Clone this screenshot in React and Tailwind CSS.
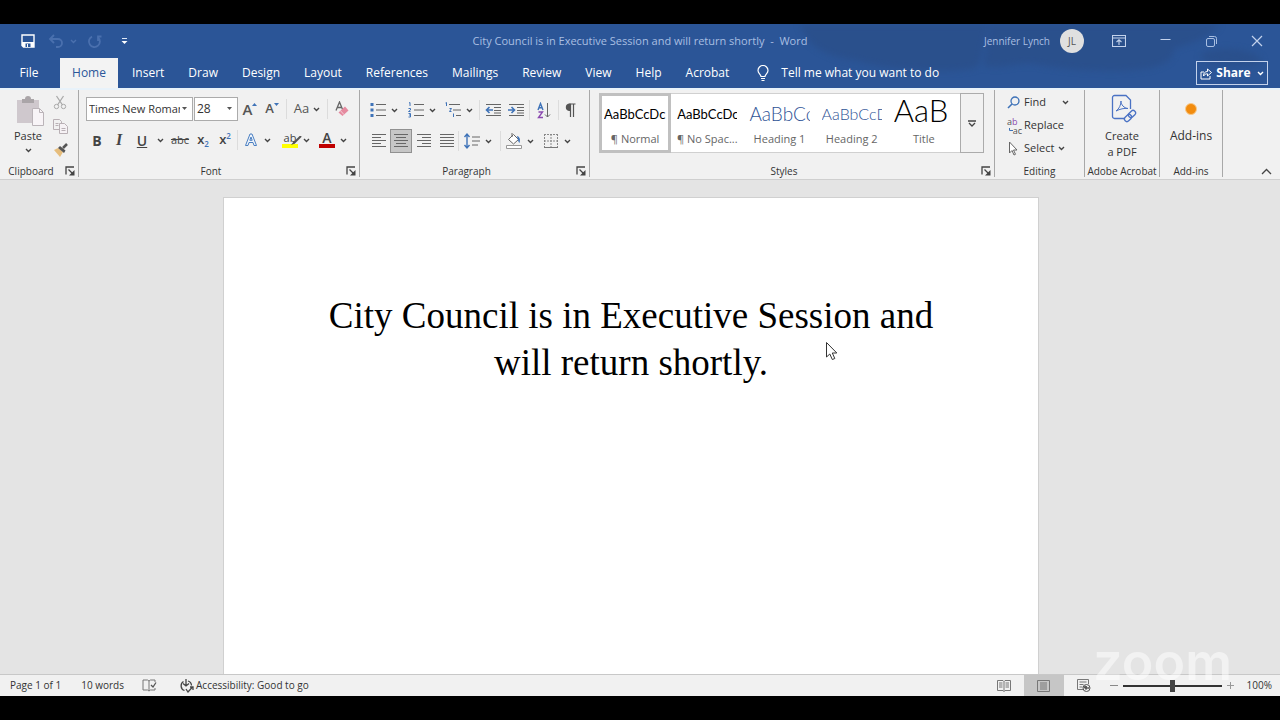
const TABS = [
  "Insert",
  "Draw",
  "Design",
  "Layout",
  "References",
  "Mailings",
  "Review",
  "View",
  "Help",
  "Acrobat",
];

const STYLES = [
  { name: "¶ Normal", sample: "AaBbCcDc", cls: "items-center leading-8 text-[13px] text-black", active: true },
  { name: "¶ No Spac...", sample: "AaBbCcDc", cls: "items-center leading-8 text-[13px] text-black" },
  { name: "Heading 1", sample: "AaBbCc", cls: "items-center leading-8 text-[19px] font-light text-[#2f5496]" },
  { name: "Heading 2", sample: "AaBbCcD", cls: "items-center leading-8 text-[16px] font-light text-[#2f5496]" },
  { name: "Title", sample: "AaB", cls: "items-start leading-7 text-[31px] font-light text-black" },
];

function Icon({ w = 18, h = 18, children, className = "" }) {
  return (
    <svg
      width={w}
      height={h}
      viewBox={`0 0 ${w} ${h}`}
      fill="none"
      stroke="#666"
      className={`shrink-0 ${className}`}
      aria-hidden="true"
    >
      {children}
    </svg>
  );
}

function Chevron({ color = "#444" }) {
  return (
    <Icon w={7} h={5}>
      <path d="M1 1l2.5 2.5L6 1" stroke={color} strokeWidth="1.4" />
    </Icon>
  );
}

function Btn({ label, className = "", children }) {
  return (
    <button type="button" aria-label={label} className={`flex h-6 shrink-0 items-center justify-center ${className}`}>
      {children}
    </button>
  );
}

function Split({ label, className = "", children }) {
  return (
    <Btn label={label} className={`gap-1 ${className}`}>
      {children}
      <Chevron />
    </Btn>
  );
}

function Sep({ className = "" }) {
  return <div className={`h-5 w-px shrink-0 bg-[#dcdcdc] ${className}`} />;
}

function Group({ title, launcher, className = "", children }) {
  return (
    <section className={`mt-0.5 mb-0.5 flex shrink-0 flex-col border-r border-[#a8a8a8] ${className}`}>
      <div className="min-h-0 flex-1">{children}</div>
      <div className="flex h-3 items-center text-[10px] text-[#333]">
        <span className="flex-1 text-center whitespace-nowrap">{title}</span>
        {launcher && (
          <button type="button" aria-label={`${title} settings`} className="flex w-4 justify-center">
            <Icon w={10} h={10}>
              <path d="M1 8.5V1h8" stroke="#444" strokeWidth="1.3" />
              <path d="M3.5 3.5l4 4" stroke="#444" strokeWidth="1.2" />
              <path d="M9.5 4v5.5H4z" fill="#444" stroke="none" />
            </Icon>
          </button>
        )}
      </div>
    </section>
  );
}

function Lines({ rows }) {
  return (
    <Icon>
      {rows.map(([a, b], i) => (
        <path key={i} d={`M${a} ${2.5 + i * 3}H${b}`} />
      ))}
    </Icon>
  );
}

function TitleBar() {
  return (
    <div className="relative grid h-[34px] grid-cols-[1fr_auto_1fr] items-center text-[#a9bfe2]">
      <div className="flex items-center pl-5">
        <Btn label="Save" className="w-4">
          <Icon w={14} h={14}>
            <path d="M1 1h12v12H2.5L1 11.5z" stroke="#fff" strokeWidth="1.4" />
            <path d="M1 8h12v5H2.5L1 11.5z" fill="#fff" stroke="none" />
            <path d="M4.500 9.5h5V13h-5z" fill="#2b579a" stroke="none" />
            <path d="M6.5 10v3" stroke="#fff" />
          </Icon>
        </Btn>
        <Btn label="Undo" className="ml-3 gap-1.5">
          <Icon w={16} h={14}>
            <path d="M2 5h8a4 4 0 010 8H8M6 1L2 5l4 4" stroke="#4a70ae" strokeWidth="1.8" />
          </Icon>
          <Chevron color="#4a70ae" />
        </Btn>
        <Btn label="Redo" className="ml-2.5">
          <Icon w={15} h={15}>
            <path d="M5 2.6a5.5 5.5 0 106 .8M11 7V2.5h3.5" stroke="#4a70ae" strokeWidth="1.8" />
          </Icon>
        </Btn>
        <Btn label="Customize toolbar" className="ml-3.5 w-4">
          <Icon w={7} h={8}>
            <path d="M1 1.5h5" stroke="#dfe8f7" />
            <path d="M.5 4h6l-3 3z" fill="#fff" stroke="none" />
          </Icon>
        </Btn>
      </div>
      <h1 className="text-[11px] whitespace-pre">
        City Council is in Executive Session and will return shortly{"  -  "}Word
      </h1>
      <div className="flex items-center justify-end text-[10px]">
        <span>Jennifer Lynch</span>
        <span className="mr-3 ml-2.5 flex size-6 items-center justify-center rounded-full bg-[#e0e0e0] text-[#555]">
          JL
        </span>
        <Btn label="Ribbon display options" className="w-[46px]">
          <Icon w={14} h={12}>
            <path d="M.5.5h13v11H.5zM.5 3h13M7 10V5M4.5 7L7 4.8 9.500 7" stroke="#c3d2ec" strokeWidth="1.1" />
          </Icon>
        </Btn>
        <Btn label="Minimize" className="w-[46px]">
          <Icon w={11} h={5}>
            <path d="M.5.5h10" stroke="#c3d2ec" />
          </Icon>
        </Btn>
        <Btn label="Restore" className="w-[46px]">
          <Icon w={11} h={11}>
            <rect x=".5" y="2.500" width="8" height="8" rx="1.500" stroke="#a9bfe2" />
            <path d="M3 .5h5.500a2 2 0 012 2V8" stroke="#a9bfe2" />
          </Icon>
        </Btn>
        <Btn label="Close" className="w-[46px]">
          <Icon w={12} h={12}>
            <path d="M1 1l10 10M11 1L1 11" stroke="#c3d2ec" strokeWidth="1.2" />
          </Icon>
        </Btn>
      </div>
    </div>
  );
}

function TabBar() {
  return (
    <nav className="relative flex h-[30px] items-stretch text-[12px] text-white">
      <button type="button" className="w-[60px] pr-0.5">File</button>
      <button type="button" className="mr-0.5 w-[58px] bg-[#f3f3f3] text-[#2b579a]">Home</button>
      {TABS.map((t) => (
        <button key={t} type="button" className="px-3">
          {t}
        </button>
      ))}
      <button type="button" className="ml-4 flex items-center gap-3">
        <Icon w={12} h={17}>
          <path
            d="M4 11.500C4 9.500 1 8.500 1 5.500a5 5 0 0110 0c0 3-3 4-3 6zM4 13.500h4M4.500 15.500h3"
            stroke="#fff"
            strokeWidth="1.2"
          />
        </Icon>
        Tell me what you want to do
      </button>
      <button
        type="button"
        className="mt-[3px] mr-3 mb-[3px] ml-auto flex w-[72px] items-center justify-center gap-1 border border-[#c3d2ec] font-bold"
      >
        <Icon w={12} h={13}>
          <path d="M4 5H1v7h9V9" stroke="#fff" />
          <path d="M3.500 9c0-3 1.500-4.500 4-4.500V2l4 3.500-4 3.500V6.800C5.500 6.800 4.500 7.500 3.500 9z" stroke="#fff" />
        </Icon>
        Share
        <span className="ml-0.5">
          <Chevron color="#fff" />
        </span>
      </button>
    </nav>
  );
}

function ClipboardGroup() {
  return (
    <Group title="Clipboard" launcher className="w-[79px]">
      <div className="flex pt-1.5 pl-3">
        <button type="button" className="flex w-8 flex-col items-center text-[11px] leading-4 text-[#333]">
          <Icon w={30} h={32} className="ml-1">
            <path d="M2 4h22v23H2z" fill="#cfc8cd" stroke="none" />
            <path d="M7 7V3h3a3 3 0 016 0h3v4z" fill="#aaa5a8" stroke="none" />
            <path d="M17.500 12.500h7l4 4v13h-11z" fill="#f8f4f7" stroke="#bbb4b9" />
            <path d="M24.500 12.500v4h4" stroke="#bbb4b9" />
          </Icon>
          Paste
          <span className="mt-1">
            <Chevron />
          </span>
        </button>
        <div className="ml-2 flex flex-col">
          <Btn label="Cut" className="-mt-1.5 w-4">
            <Icon w={14} h={15}>
              <path d="M3.500 1l6 9M10.500 1l-6 9" stroke="#aaa" strokeWidth="1.300" />
              <circle cx="3.500" cy="11.500" r="2.200" stroke="#aaa" />
              <circle cx="10.500" cy="11.500" r="2.200" stroke="#aaa" />
            </Icon>
          </Btn>
          <Btn label="Copy" className="w-4">
            <Icon w={15} h={15}>
              <path d="M.5.5h6l2 2v8h-8zM2.500 4.500h3M2.500 6.500h3" stroke="#b9b0b5" />
              <path d="M6.500 4.500h5l3 3v7h-8z" fill="#f6f2f5" stroke="#b9b0b5" />
              <path d="M8.500 9.500h4M8.500 11.500h4" stroke="#b9b0b5" />
            </Icon>
          </Btn>
          <Btn label="Format painter" className="w-4">
            <Icon w={15} h={14}>
              <path d="M1 7l4-2 5 4-3 5z" fill="#e6bd7c" stroke="none" />
              <path d="M5 5l2-2 5.500 4.500L11 10z" fill="#555" stroke="none" />
              <path d="M10 5l4-4" stroke="#555" strokeWidth="2.500" />
            </Icon>
          </Btn>
        </div>
      </div>
    </Group>
  );
}

function Combo({ label, value, className }) {
  return (
    <div className={`relative h-6 ${className}`}>
      <select
        aria-label={label}
        defaultValue={value}
        className="h-full w-full appearance-none overflow-hidden border border-[#ababab] bg-white pr-3 pl-0.5 text-[#333]"
      >
        <option>{value}</option>
      </select>
      <Icon w={5} h={3} className="pointer-events-none absolute top-2.5 right-1.5">
        <path d="M0 0h5L2.500 3z" fill="#555" stroke="none" />
      </Icon>
    </div>
  );
}

function FontGroup() {
  return (
    <Group title="Font" launcher className="w-[281px]">
      <div className="flex items-center pt-[7px] pl-[7px] text-[#555]">
        <Combo label="Font" value="Times New Roman" className="w-[107px] text-[11px]" />
        <Combo label="Font size" value="28" className="ml-px w-11 text-[12px]" />
        <Btn label="Grow font" className="w-6 text-[15px] font-semibold">
          A
          <Icon w={5} h={14}>
            <path d="M0 4l2.500-3L5 4z" fill="#3f73b8" stroke="none" />
          </Icon>
        </Btn>
        <Btn label="Shrink font" className="w-5 text-[13px] font-semibold">
          A
          <Icon w={5} h={14}>
            <path d="M0 1h5L2.500 4z" fill="#3f73b8" stroke="none" />
          </Icon>
        </Btn>
        <Sep className="ml-1" />
        <Btn label="Change case" className="w-10 gap-1 text-[13px]">
          Aa
          <Chevron />
        </Btn>
        <Sep />
        <Btn label="Clear formatting" className="w-7">
          <Icon w={14} h={16}>
            <path d="M1 9.500L4.500 1 8 9.500M2.300 6.500h4.500" stroke="#666" strokeWidth="1.300" />
            <path d="M3.500 11.500L10 5.500l3.500 4L7.500 15z" fill="#e58a9f" stroke="none" />
            <path d="M5.500 9.800l3.500 3.800" stroke="#f5d0d8" />
          </Icon>
        </Btn>
      </div>
      <div className="flex items-center pt-[7px] pl-2 text-[14px] text-[#444]">
        <Btn className="w-5 font-bold">B</Btn>
        <Btn className="w-6 font-['Liberation_Serif',serif] text-[16px] font-bold italic">I</Btn>
        <Btn className="w-[22px] font-semibold underline">U</Btn>
        <Btn label="Underline style" className="w-3.5">
          <Chevron />
        </Btn>
        <Btn className="w-[26px] text-[11px] line-through">abc</Btn>
        <Btn className="w-5 text-[13px] font-semibold">
          x<span className="mt-2 text-[8px] text-[#3f73b8]">2</span>
        </Btn>
        <Btn className="w-6 text-[13px] font-semibold">
          x<span className="mb-2 text-[8px] text-[#3f73b8]">2</span>
        </Btn>
        <Sep />
        <Split label="Text effects" className="ml-1">
          <Icon w={18} h={16}>
            <path
              d="M3.500 13.500L8 2h2l4.500 11.500H12l-1-3H7l-1 3zM7.800 8.300h2.400L9 5z"
              fill="#eef4fc"
              stroke="#4a7fc1"
            />
          </Icon>
        </Split>
        <Split label="Highlight" className="ml-2.5">
          <span className="flex w-[18px] flex-col items-center">
            <span className="relative text-[11px] leading-3">
              ab
              <Icon w={12} h={12} className="absolute top-1 left-1.5">
                <path d="M11 0L4 7" stroke="#555" strokeWidth="2" />
                <path d="M4 5L1 9l4-1.500z" fill="#555" stroke="none" />
              </Icon>
            </span>
            <span className="h-1 w-4 bg-[#ffff00]" />
          </span>
        </Split>
        <Split label="Font color" className="ml-2">
          <span className="flex w-[18px] flex-col items-center">
            <span className="text-[14px] leading-3 font-semibold">A</span>
            <span className="h-1 w-4 bg-[#c00000]" />
          </span>
        </Split>
      </div>
    </Group>
  );
}

function ParagraphGroup() {
  return (
    <Group title="Paragraph" launcher className="w-[230px]">
      <div className="flex items-center pt-2 pl-[9px]">
        <Split label="Bullets">
          <Icon>
            <path d="M7 3.500h10M7 9h10M7 14.500h10" />
            <path d="M1.500 2h3v3h-3zM1.500 7.500h3v3h-3zM1.500 13h3v3h-3z" fill="#3f73b8" stroke="none" />
          </Icon>
        </Split>
        <Split label="Numbering" className="ml-[9px]">
          <Icon>
            <path d="M7 3.500h10M7 9h10M7 14.500h10" />
            <path
              d="M2 2l1-.5V5M1.500 7.500h2v1.500l-2 1.500h2M1.500 12.500h2v3.500h-2M2 14h1.500"
              stroke="#3f73b8"
            />
          </Icon>
        </Split>
        <Split label="Multilevel list" className="ml-2">
          <Icon>
            <path d="M5 3.500h11M9 9h8M12 14.500h5" />
            <path d="M1.500 2l1-.5V5M5.500 7.500h2L5.500 10.500h2M9.500 12.500V16" stroke="#3f73b8" />
          </Icon>
        </Split>
        <Sep className="ml-1.5" />
        <Btn label="Decrease indent" className="w-[26px]">
          <Icon w={17}>
            <path d="M1 3.500h15M9 6.500h7M9 9.500h7M1 14.500h15M9 12h7" />
            <path d="M8 9H1.500M4.500 6L1.500 9l3 3" stroke="#3f73b8" strokeWidth="1.600" />
          </Icon>
        </Btn>
        <Btn label="Increase indent" className="w-5">
          <Icon w={17}>
            <path d="M1 3.500h15M9 6.500h7M9 9.500h7M1 14.500h15M9 12h7" />
            <path d="M0 9h6.500M3.500 6l3 3-3 3" stroke="#3f73b8" strokeWidth="1.600" />
          </Icon>
        </Btn>
        <Sep className="ml-[3px]" />
        <Btn label="Sort" className="w-7">
          <Icon w={14} h={17}>
            <path d="M1 8l2.500-6.500L6 8M2 5.800h3" stroke="#3f73b8" strokeWidth="1.400" />
            <path d="M1.500 10h4l-4 5.500h4.500" stroke="#8b4ab0" strokeWidth="1.400" />
            <path d="M10.500 1v14M8 12.500l2.500 2.500 2.500-2.500" />
          </Icon>
        </Btn>
        <Sep />
        <Btn label="Show marks" className="w-[22px]">
          <Icon w={12} h={15}>
            <path d="M5.500 1h6M6.500 1v13M9.500 1v13" stroke="#555" strokeWidth="1.200" />
            <path d="M6.500.5H5a3.800 3.800 0 000 7.500h1.500z" fill="#555" stroke="none" />
          </Icon>
        </Btn>
      </div>
      <div className="flex items-center pt-[7px] pl-[7px]">
        <Btn label="Align left" className="w-[23px]">
          <Lines rows={[[2, 16], [2, 11], [2, 16], [2, 11], [2, 16]]} />
        </Btn>
        <Btn label="Center" className="w-[22px] border border-[#919191] bg-[#c6c6c6]">
          <Lines rows={[[2, 16], [4, 14], [2, 16], [4, 14], [2, 16]]} />
        </Btn>
        <Btn label="Align right" className="w-6">
          <Lines rows={[[2, 16], [7, 16], [2, 16], [7, 16], [2, 16]]} />
        </Btn>
        <Btn label="Justify" className="w-[22px]">
          <Lines rows={[[2, 16], [2, 16], [2, 16], [2, 16], [2, 16]]} />
        </Btn>
        <Sep />
        <Split label="Line spacing" className="ml-1">
          <Icon>
            <path d="M9 5h8M9 9h8M9 13h6" />
            <path d="M4 2v14M1.500 5L4 2l2.500 3M1.500 13L4 16l2.500-3" stroke="#3f73b8" strokeWidth="1.400" />
          </Icon>
        </Split>
        <Sep className="ml-2" />
        <Split label="Shading" className="ml-1">
          <Icon>
            <path d="M3.500 7.500L8.500 2.500l5 5-5 4.500zM7 1v4" fill="#fff" />
            <path d="M12 4c3 .5 3.500 4 2.500 7-1.500-1-1.500-4-2.500-7z" fill="#3f73b8" stroke="none" />
            <path d="M1.500 13.500h15v3h-15z" fill="#fff" stroke="#999" />
          </Icon>
        </Split>
        <Split label="Borders" className="ml-2">
          <Icon>
            <path d="M2.500 2v13M15.500 2v13M9 2v13M2 2.500h14M2 9h14" stroke="#888" strokeDasharray="2 1" />
            <path d="M2 15.500h14" stroke="#777" />
          </Icon>
        </Split>
      </div>
    </Group>
  );
}

function StylesGroup() {
  return (
    <Group title="Styles" launcher className="w-[405px]">
      <div className="mt-[3px] ml-[9px] flex h-[60px] w-[385px]">
        <div className="grid flex-1 grid-cols-5 border-y border-[#d0d0d0] bg-white">
          {STYLES.map((s) => (
            <button
              key={s.name}
              type="button"
              className={
                s.active
                  ? "-my-px flex min-w-0 flex-col items-center border-3 border-[#c0c0c0] px-0.5"
                  : "flex min-w-0 flex-col items-center px-1.5 py-0.5"
              }
            >
              <span
                className={`flex h-[35px] w-full overflow-hidden font-['Lato',sans-serif] whitespace-nowrap ${s.cls}`}
              >
                {s.sample}
              </span>
              <span className="text-[11px] leading-4 whitespace-nowrap text-[#666]">{s.name}</span>
            </button>
          ))}
        </div>
        <button
          type="button"
          aria-label="More styles"
          className="flex w-6 items-center justify-center border border-[#ababab]"
        >
          <Icon w={8} h={7}>
            <path d="M0 1h8M1 3l3 3 3-3" stroke="#444" strokeWidth="1.300" />
          </Icon>
        </button>
      </div>
    </Group>
  );
}

function EditingGroup() {
  return (
    <Group title="Editing" className="w-[90px]">
      <div className="flex flex-col items-start pt-px pl-3 text-[11px] text-[#333]">
        <button type="button" className="flex h-[23px] items-center gap-1">
          <Icon w={13} h={13}>
            <circle cx="8" cy="5" r="4" stroke="#3f73b8" strokeWidth="1.300" />
            <path d="M5 8l-4 4" stroke="#3f73b8" strokeWidth="1.600" />
          </Icon>
          Find
          <span className="ml-3">
            <Chevron />
          </span>
        </button>
        <button type="button" className="flex h-[23px] items-center gap-0.5">
          <span className="flex w-[15px] flex-col text-[9px] leading-[9px] text-[#555]">
            <span className="text-left">
              a<span className="text-[#8b4ab0]">b</span>
            </span>
            <span className="flex items-center justify-end">
              <Icon w={4} h={5}>
                <path d="M.5 0v2.500H4" stroke="#3f73b8" />
              </Icon>
              ac
            </span>
          </span>
          Replace
        </button>
        <button type="button" className="flex h-[23px] items-center gap-1">
          <Icon w={13} h={15}>
            <path d="M2.500 1v11l2.500-2.500 2 4.500 1.500-.7-2-4.300H10z" fill="#fff" />
          </Icon>
          Select
          <Chevron />
        </button>
      </div>
    </Group>
  );
}

function Ribbon() {
  return (
    <div className="flex h-[92px] border-t-2 border-b border-t-[#e8f2fa] border-b-[#cfcfcf] bg-[#f1f1f1]">
      <div className="-mt-0.5 flex flex-1">
        <ClipboardGroup />
        <FontGroup />
        <ParagraphGroup />
        <StylesGroup />
        <EditingGroup />
        <Group title="Adobe Acrobat" className="w-[75px]">
          <button
            type="button"
            className="flex w-full flex-col items-center pt-1 text-[11px] leading-4 text-[#333]"
          >
            <Icon w={26} h={30} className="mb-1 ml-1">
              <path d="M13 24.500H3.500a2 2 0 01-2-2v-19a2 2 0 012-2H15l4.500 4.500V15" stroke="#4a72c4" strokeWidth="1.300" />
              <path d="M5 17c3-2 5-6 5-10 0 4 3 7 7 7.500-4-.5-8 .5-12 2.500z" stroke="#4a72c4" />
              <rect x="13" y="21.500" width="8" height="5" rx="2.500" transform="rotate(-45 17 24)" stroke="#4a72c4" strokeWidth="1.300" />
              <rect x="17" y="17.500" width="8" height="5" rx="2.500" transform="rotate(-45 21 20)" stroke="#4a72c4" strokeWidth="1.300" />
            </Icon>
            Create
            <br />a PDF
          </button>
        </Group>
        <Group title="Add-ins" className="w-[63px]">
          <button
            type="button"
            className="flex w-full flex-col items-center pt-[13px] text-[12px] leading-4 text-[#333]"
          >
            <span className="mb-[13px] size-3 rounded-full border border-[#f8c98a] bg-[#f28c0f]" />
            Add-ins
          </button>
        </Group>
        <button type="button" aria-label="Collapse ribbon" className="mr-2 mb-1 ml-auto self-end">
          <Icon w={11} h={7}>
            <path d="M1 6l4.500-4.500L10 6" stroke="#444" strokeWidth="1.300" />
          </Icon>
        </button>
      </div>
    </div>
  );
}

function StatusBar() {
  return (
    <footer className="flex h-[22px] items-center border-t border-[#c8c8c8] bg-[#f1f1f1] text-[10px] text-[#333]">
      <span className="ml-2.5">Page 1 of 1</span>
      <span className="ml-5">10 words</span>
      <button type="button" aria-label="Proofing" className="ml-[18px]">
        <Icon w={15} h={13}>
          <path d="M7 12V2L5.500 1H1v10h4.500L7 12l1.500-1H13V9M7 2l1.500-1H13v2" stroke="#777" />
          <path d="M9 6l2 2 3-4.500" stroke="#555" strokeWidth="1.300" />
        </Icon>
      </button>
      <button type="button" className="ml-[22px] flex items-center gap-0.5">
        <Icon w={15} h={14}>
          <path d="M4.500 2.500a5 5 0 001 9M9 2a5 5 0 013.500 4.500" stroke="#444" strokeWidth="1.300" />
          <path d="M7 0v7M4 4.500L7 7l3-2.500M7 10l2 3 4.500-5M11 8h3v3" stroke="#444" strokeWidth="1.300" />
        </Icon>
        Accessibility: Good to go
      </button>
      <div className="ml-auto flex h-full items-center">
        <button type="button" aria-label="Read mode" className="flex h-full w-10 items-center justify-center">
          <Icon w={14} h={12}>
            <path
              d="M7 11.500V1.500L6 .5H.5v10H6l1 1 1-1h5.500V.5H8l-1 1M2 3h3.500M2 5h3.500M2 7h3.500M8.500 3H12M8.500 5H12M8.500 7H12"
              stroke="#777"
            />
          </Icon>
        </button>
        <button
          type="button"
          aria-label="Print layout"
          className="flex h-full w-10 items-center justify-center bg-[#c6c6c6]"
        >
          <Icon w={13} h={12}>
            <path d="M.5.5h12v11H.5zM3 3h7M3 5h7M3 7h7M3 9h7" stroke="#777" />
          </Icon>
        </button>
        <button type="button" aria-label="Web layout" className="flex h-full w-10 items-center justify-center">
          <Icon w={14} h={13}>
            <path d="M6 10.500H.5V.5h11V5M2.500 3h7M2.500 5.500h4M2.500 8h3" stroke="#777" />
            <circle cx="9.500" cy="9" r="3.500" fill="#f1f1f1" stroke="#555" />
            <path d="M7 8l2-1 1.500 2-1.500 1.500zM11 10l1-2" fill="#555" stroke="#555" />
          </Icon>
        </button>
        <button type="button" aria-label="Zoom out" className="ml-0.5 flex w-4 justify-center">
          <Icon w={9} h={9}>
            <path d="M1 4.500h8" stroke="#888" />
          </Icon>
        </button>
        <input
          type="range"
          aria-label="Zoom"
          min="0"
          max="100"
          defaultValue="50"
          className="mx-px h-3 w-[99px] appearance-none bg-transparent [&::-webkit-slider-runnable-track]:h-0.5 [&::-webkit-slider-runnable-track]:bg-[#333] [&::-webkit-slider-thumb]:-mt-[5px] [&::-webkit-slider-thumb]:h-3 [&::-webkit-slider-thumb]:w-[5px] [&::-webkit-slider-thumb]:appearance-none [&::-webkit-slider-thumb]:bg-[#444]"
        />
        <button type="button" aria-label="Zoom in" className="flex w-4 justify-center">
          <Icon w={9} h={9}>
            <path d="M1 4.500h7M4.500 1v7" stroke="#999" />
          </Icon>
        </button>
        <span className="mr-2 ml-2">100%</span>
      </div>
    </footer>
  );
}

export default function App() {
  return (
    <div className="h-screen bg-black py-6 font-['Open_Sans','Noto_Sans',sans-serif]">
      <div className="relative flex h-full flex-col">
        <header className="relative overflow-hidden bg-[#2b5597]">
          {/* faint ink wash behind the window controls */}
          <svg
            className="absolute top-0 right-0 blur-[3px]"
            width="480"
            height="64"
            viewBox="0 0 480 64"
            fill="#2a4d85"
            fillOpacity=".6"
            aria-hidden="true"
          >
            <path d="M0 0h110l80 0c-10 20-6 40-15 44-30 6-90 2-120-8C20 32 5 18 0 0z" />
            <path d="M190 0h230c-10 14-30 20-46 24 0 14-14 20-40 22-40 3-80-2-100-6-20-2-30 6-50 2z" />
            <path d="M400 32c10-10 50-10 62 4 4 8-60 8-62-4z" />
          </svg>
          <TitleBar />
          <TabBar />
        </header>
        <Ribbon />
        <main className="flex min-h-0 flex-1 justify-center overflow-hidden bg-[#e4e4e4] pt-[17px] pr-[18px]">
          <article className="relative w-[816px] border border-b-0 border-[#d0d0d0] bg-white px-24 pt-[94px]">
            <p className="text-center font-['Liberation_Serif','Times_New_Roman',serif] text-[37px] leading-[47px] text-black">
              City Council is in Executive Session and will return shortly.
            </p>
            <Icon w={13} h={20} className="absolute top-[143px] left-[601px]">
              <path d="M1.500 1.500v14.500l3.300-3 2.500 5.500 2.500-1-2.500-5.500h4.500z" fill="#fff" stroke="#333" />
            </Icon>
          </article>
        </main>
        <StatusBar />
        <div className="pointer-events-none absolute right-12 bottom-2 font-['Inter',sans-serif] text-[52px] leading-[52px] font-semibold text-white/50">
          zoom
        </div>
      </div>
    </div>
  );
}
